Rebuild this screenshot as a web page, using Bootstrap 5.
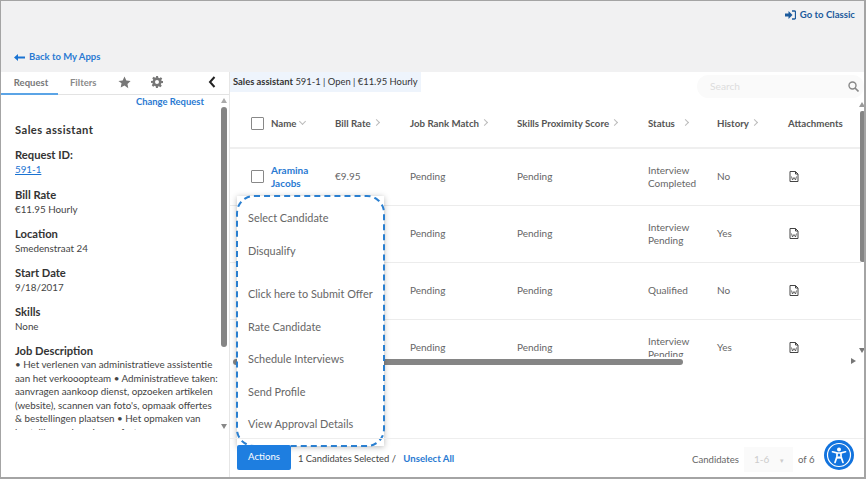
<!DOCTYPE html>
<html lang="en">
<head>
<meta charset="utf-8">
<title>Candidates</title>
<link href="https://cdn.jsdelivr.net/npm/bootstrap@5.3.0/dist/css/bootstrap.min.css" rel="stylesheet">
<style>
html,body{height:100%;}
body{font-family:Lato,"Liberation Sans",sans-serif;font-size:9.8px;color:#555;background:#fff;overflow:hidden;}
a{color:#1a73d2;text-decoration:none;}
.shell{width:866px;height:479px;border:1px solid #a4a4a4;border-width:1px 2px 2px 1px;position:relative;overflow:hidden;}
.topband{height:71px;background:#f1f1f2;}
.classic{color:#1b5a9c;font-weight:700;font-size:9.6px;padding:7px 9px 0 0;line-height:14px;}
.backlink{font-weight:700;font-size:9.5px;padding-left:13px;line-height:14px;padding-bottom:8px;color:#2a7ad2;}
.workarea{height:405px;}
.sidepane{width:229px;flex:none;border-right:1px solid #e6e6e6;position:relative;}
.tabstrip{height:23px;border-bottom:1px solid #e3e3e3;position:relative;color:#8a8a8a;font-weight:700;font-size:9.5px;}
.tabitem{line-height:22px;}
.tabon{width:57px;text-align:center;color:#777;border-bottom:2px solid #5ba4e6;height:23px;padding-left:3px;}
.taboff{margin-left:12px;width:34px;}
.changereq{font-weight:700;text-align:right;padding:0 25px 0 0;line-height:14px;font-size:9.45px;}
.changereq a{color:#2a7ad2;}
.detailbox{height:321px;overflow:hidden;padding:13px 0 0 14px;width:218px;color:#444;font-size:9.8px;line-height:14px;}
.detailbox h6{font-family:inherit;font-size:11.2px;font-weight:700;color:#333;margin:0;line-height:15px;}
.detailbox h6.jobtitle{letter-spacing:.45px;}
.detailgroup{margin-bottom:10px;}
.detailgroup.idgroup{margin-bottom:11px;}
.detailtext{line-height:13.6px;font-size:9.8px;}
.idlink{text-decoration:underline;color:#1a73d2;}
.mainpane{flex:1;min-width:0;position:relative;}
.infobar{height:28px;}
.infotag{background:#eef4fc;color:#333;font-size:9.4px;height:20px;line-height:20px;padding:0 3px;}
.searchpill{position:absolute;left:467px;top:3px;width:167px;height:23px;border-radius:12px;background:#fafafa;color:#ddd;font-size:10.2px;padding:0 0 0 13px;line-height:23px;}
.tablewrap{height:257px;overflow:hidden;width:631px;}
.tablewrap table{table-layout:fixed;width:631px;margin:0;font-size:10px;color:#666;border-collapse:collapse;}
.tablewrap th{height:48px;font-weight:700;color:#555;font-size:9.7px;vertical-align:middle;padding:0;border-bottom:2px solid #efefef;}
.tablewrap td{height:57px;vertical-align:middle;padding:0;border-bottom:1px solid #ececec;line-height:13px;color:#666;font-size:10px;}
.boxcheck{width:13px;height:13px;border:1px solid #888;border-radius:1px;display:block;margin-left:21px;background:#fff;}
.chev{display:inline-block;width:5px;height:5px;border-top:1px solid #bbb;border-right:1px solid #bbb;transform:rotate(45deg);margin-left:3px;vertical-align:2px;}
.chevdown{transform:rotate(135deg);vertical-align:3px;}
.docicon{display:block;margin-left:1px;}
.colcheck{width:41px}.colname{width:64px}.colrate{width:75px}.colrank{width:107px}.colscore{width:131px}.colstatus{width:69px}.colhist{width:71px}.colfile{width:73px}
.namelink{color:#2a7ad2;font-weight:700;}
.hbar{position:absolute;left:3px;top:287px;width:450px;height:6px;background:#858585;border-radius:3px;}
.harrow{position:absolute;left:621px;top:286px;width:0;height:0;border-left:5px solid #777;border-top:3.5px solid transparent;border-bottom:3.5px solid transparent;}
.vbar{position:absolute;left:630px;top:39px;width:5px;height:151px;background:#858585;border-radius:2px;}
.varrowup{position:absolute;left:629px;top:30px;border-left:3.5px solid transparent;border-right:3.5px solid transparent;border-bottom:5px solid #999;}
.varrowdown{position:absolute;left:629px;top:276px;border-left:3.5px solid transparent;border-right:3.5px solid transparent;border-top:5px solid #777;}
.sidebar-thumb{position:absolute;left:220px;top:35px;width:6px;height:240px;background:#858585;border-radius:3px;}
.sideup{position:absolute;left:220px;top:26px;border-left:3.5px solid transparent;border-right:3.5px solid transparent;border-bottom:5px solid #aaa;}
.sidedown{position:absolute;left:220px;top:352px;border-left:3.5px solid transparent;border-right:3.5px solid transparent;border-top:5px solid #888;}
.popmenu{position:absolute;left:7px;top:124px;width:147px;height:250px;background:#fff;box-shadow:0 1px 6px rgba(0,0,0,.28);}
.popdash{margin:-1px;height:252px;border:2px dashed #2a7fd0;border-radius:18px;padding:5px 0 0 10px;color:#666;font-size:10.9px;}
.popdash div{height:32.5px;line-height:32.5px;white-space:nowrap;}
.popdash .popgap{height:11px;}
.footbar{position:absolute;left:0;right:0;bottom:0;height:39px;border-top:1px solid #eee;padding-left:7px;padding-top:6px;}
.actionbtn{background:#1e7ee0;color:#fff;border:0;border-radius:2px;font-size:9.6px;width:54px;height:25px;padding:0;}
.selinfo{color:#444;font-size:9.4px;margin-left:7px;padding-top:7px;line-height:14px;}
.unsel{font-weight:700;color:#2a7ad2;margin-left:5px;font-size:9.6px;}
.pager{position:absolute;left:462px;top:8px;color:#666;font-size:9.6px;}
.pagerlabel{line-height:25px;}
.pagebox{width:49px;height:25px;background:#fafafa;color:#ccc;margin:0 5px 0 5px;line-height:25px;padding-left:10px;font-size:10px;}
.a11y{position:absolute;left:594px;top:1px;width:30px;height:30px;border-radius:50%;background:#1273de;}
</style>
</head>
<body>
<div class="shell">
  <div class="topband d-flex flex-column justify-content-between">
    <div class="d-flex justify-content-end">
      <a href="#" class="classic d-flex align-items-center">
        <svg width="11" height="10" viewBox="0 0 11 10"><path d="M0 3.500h3.500V1L7.500 5 3.500 9V6.500H0z" fill="#1b5a9c"/><path d="M7 1h2.500a1 1 0 0 1 1 1v6a1 1 0 0 1-1 1H7" fill="none" stroke="#1b5a9c" stroke-width="1.300"/></svg>
        <span class="ms-1">Go to Classic</span>
      </a>
    </div>
    <a href="#" class="backlink d-flex align-items-center">
      <svg width="11" height="7" viewBox="0 0 11 7"><path d="M4 0v2.500h7v2H4V7L0 3.500z" fill="#1a73d2"/></svg>
      <span class="ms-1">Back to My Apps</span>
    </a>
  </div>
  <div class="workarea d-flex">
    <aside class="sidepane">
      <div class="tabstrip d-flex align-items-start">
        <div class="tabitem tabon">Request</div>
        <div class="tabitem taboff">Filters</div>
        <svg class="mt-1" style="margin-left:14px" width="13" height="13" viewBox="0 0 24 24"><path d="M12 1l3.400 7.200 7.800 1-5.700 5.400 1.500 7.800L12 17.600l-7 3.800 1.500-7.800L.8 9.200l7.800-1z" fill="#777"/></svg>
        <svg class="mt-1" style="margin-left:20px" width="12" height="12" viewBox="0 0 24 24"><path fill="#777" fill-rule="evenodd" d="M10 0h4l.7 3.500 2 .8 3-2 2.800 2.800-2 3 .8 2L24 10v4l-3.700.7-.8 2 2 3-2.800 2.800-3-2-2 .8L14 24h-4l-.7-3.700-2-.8-3 2-2.800-2.800 2-3-.8-2L0 14v-4l3.700-.7.8-2-2-3 2.800-2.800 3 2 2-.8zM12 8a4 4 0 1 0 0 8 4 4 0 0 0 0-8z"/></svg>
        <svg class="mt-1" style="margin-left:45px" width="8" height="12" viewBox="0 0 8 12"><path d="M6.500 1L2 6l4.500 5" fill="none" stroke="#222" stroke-width="2"/></svg>
      </div>
      <div class="changereq"><a href="#">Change Request</a></div>
      <div class="detailbox">
        <div class="detailgroup"><h6 class="jobtitle">Sales assistant</h6></div>
        <div class="detailgroup idgroup"><h6>Request ID:</h6><a href="#" class="idlink">591-1</a></div>
        <div class="detailgroup"><h6>Bill Rate</h6>€11.95 Hourly</div>
        <div class="detailgroup"><h6>Location</h6>Smedenstraat 24</div>
        <div class="detailgroup"><h6>Start Date</h6>9/18/2017</div>
        <div class="detailgroup"><h6>Skills</h6>None</div>
        <div class="detailgroup"><h6>Job Description</h6><div class="detailtext">• Het verlenen van administratieve assistentie aan het verkooopteam • Administratieve taken: aanvragen aankoop dienst, opzoeken artikelen (website), scannen van foto's, opmaak offertes &amp; bestellingen plaatsen • Het opmaken van bestellingen, leveringen, facturen en prijsofferten</div></div>
      </div>
      <span class="sideup"></span><span class="sidebar-thumb"></span><span class="sidedown"></span>
    </aside>
    <main class="mainpane">
      <div class="infobar d-flex align-items-start"><div class="infotag"><b>Sales assistant</b> 591-1 | Open | €11.95 Hourly</div></div>
      <div class="searchpill">Search
        <svg class="position-absolute" style="right:5px;top:6px" width="11" height="11" viewBox="0 0 11 11"><circle cx="4.500" cy="4.500" r="3.500" fill="none" stroke="#888" stroke-width="1.400"/><path d="M7 7l3.500 3.500" stroke="#888" stroke-width="1.600"/></svg>
      </div>
      <div class="tablewrap">
        <table class="table">
          <colgroup><col class="colcheck"><col class="colname"><col class="colrate"><col class="colrank"><col class="colscore"><col class="colstatus"><col class="colhist"><col class="colfile"></colgroup>
          <thead><tr>
            <th><span class="boxcheck"></span></th><th>Name<span class="chev chevdown"></span></th><th>Bill Rate<span class="chev"></span></th><th>Job Rank Match<span class="chev"></span></th><th>Skills Proximity Score<span class="chev"></span></th><th>Status<span class="chev ms-2"></span></th><th>History<span class="chev"></span></th><th>Attachments</th>
          </tr></thead>
          <tbody>
            <tr><td><span class="boxcheck"></span></td><td><a href="#" class="namelink">Aramina Jacobs</a></td><td>€9.95</td><td>Pending</td><td>Pending</td><td>Interview Completed</td><td>No</td><td><svg class="docicon" width="10" height="11" viewBox="0 0 10 11"><path d="M1 .5h5.500L9 3v7.500H1z" fill="none" stroke="#444"/><path d="M6.500.5V3H9" fill="none" stroke="#444"/><path d="M2.500 5.500l1 3.500 1.500-2.500L6.500 9l1-3.500" fill="none" stroke="#444" stroke-width=".8"/></svg></td></tr>
            <tr><td></td><td></td><td></td><td>Pending</td><td>Pending</td><td>Interview Pending</td><td>Yes</td><td><svg class="docicon" width="10" height="11" viewBox="0 0 10 11"><path d="M1 .5h5.500L9 3v7.500H1z" fill="none" stroke="#444"/><path d="M6.500.5V3H9" fill="none" stroke="#444"/><path d="M2.500 5.500l1 3.500 1.500-2.500L6.500 9l1-3.500" fill="none" stroke="#444" stroke-width=".8"/></svg></td></tr>
            <tr><td></td><td></td><td></td><td>Pending</td><td>Pending</td><td>Qualified</td><td>No</td><td><svg class="docicon" width="10" height="11" viewBox="0 0 10 11"><path d="M1 .5h5.500L9 3v7.500H1z" fill="none" stroke="#444"/><path d="M6.500.5V3H9" fill="none" stroke="#444"/><path d="M2.500 5.500l1 3.500 1.500-2.500L6.500 9l1-3.500" fill="none" stroke="#444" stroke-width=".8"/></svg></td></tr>
            <tr><td></td><td></td><td></td><td>Pending</td><td>Pending</td><td>Interview Pending</td><td>Yes</td><td><svg class="docicon" width="10" height="11" viewBox="0 0 10 11"><path d="M1 .5h5.500L9 3v7.500H1z" fill="none" stroke="#444"/><path d="M6.500.5V3H9" fill="none" stroke="#444"/><path d="M2.500 5.500l1 3.500 1.500-2.500L6.500 9l1-3.500" fill="none" stroke="#444" stroke-width=".8"/></svg></td></tr>
          </tbody>
        </table>
      </div>
      <span class="hbar"></span><span class="harrow"></span>
      <span class="varrowup"></span><span class="vbar"></span><span class="varrowdown"></span>
      <div class="popmenu"><div class="popdash">
        <div>Select Candidate</div><div>Disqualify</div><div class="popgap"></div><div>Click here to Submit Offer</div><div>Rate Candidate</div><div>Schedule Interviews</div><div>Send Profile</div><div>View Approval Details</div>
      </div></div>
      <div class="footbar d-flex align-items-start">
        <button type="button" class="btn actionbtn">Actions</button>
        <div class="selinfo">1 Candidates Selected / <a href="#" class="unsel">Unselect All</a></div>
        <div class="pager d-flex"><span class="pagerlabel">Candidates</span><span class="pagebox">1-6 <span class="ms-2" style="font-size:7px">▾</span></span><span class="pagerlabel">of 6</span></div>
        <div class="a11y d-flex align-items-center justify-content-center">
          <svg width="26" height="26" viewBox="0 0 26 26"><circle cx="13" cy="13" r="11.500" fill="none" stroke="#fff" stroke-width="1.200"/><circle cx="13" cy="7.500" r="2" fill="#fff"/><path d="M6.500 9.800l4.500 1.200v3.500L9 20.500M19.500 9.800L15 11v3.500l2 6M11 11h4M13 15l-1 1M13 15l1 1" fill="none" stroke="#fff" stroke-width="1.700" stroke-linecap="round"/></svg>
        </div>
      </div>
    </main>
  </div>
</div>
<script src="https://cdn.jsdelivr.net/npm/bootstrap@5.3.0/dist/js/bootstrap.bundle.min.js"></script>
</body>
</html>
